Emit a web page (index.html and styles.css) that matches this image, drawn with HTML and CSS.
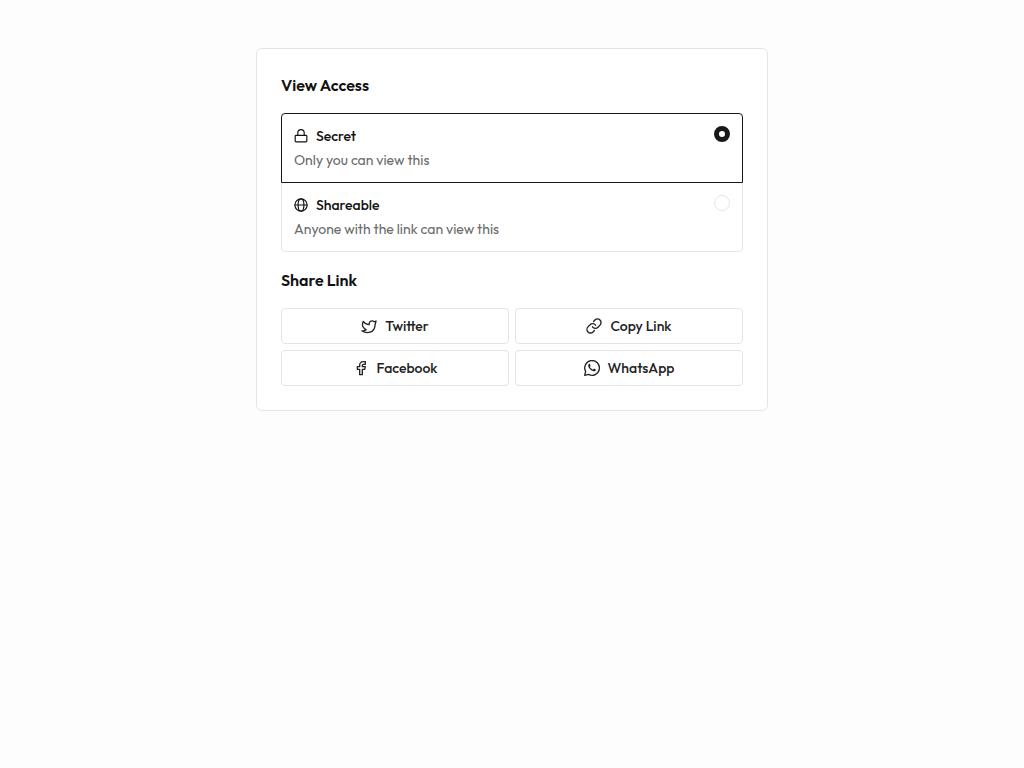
FILE: index.html
```html
<!DOCTYPE html>
<html lang="en">
<head>
<meta charset="utf-8">
<meta name="viewport" content="width=device-width, initial-scale=1">
<title>View Access</title>
<link rel="stylesheet" href="styles.css">
</head>
<body>
<main class="card">
  <section class="section">
    <h2 class="heading" id="access-heading">View Access</h2>
    <div class="options" role="radiogroup" aria-labelledby="access-heading">
      <label class="option">
        <span class="option-body">
          <span class="option-title">
            <svg class="icon-small" viewBox="0 0 24 24" aria-hidden="true"><rect x="2" y="11" width="20" height="11" rx="1.5"/><path d="M6.5 11V6.500a5.500 5.500 0 0 1 11 0V11"/></svg>
            Secret
          </span>
          <span class="option-text">Only you can view this</span>
        </span>
        <input class="radio" type="radio" name="access" value="secret" checked>
      </label>
      <label class="option">
        <span class="option-body">
          <span class="option-title">
            <svg class="icon-small" viewBox="0 0 24 24" aria-hidden="true"><circle cx="12" cy="12" r="10.5"/><ellipse cx="12" cy="12" rx="5" ry="10.5"/><path d="M1.5 12h21"/></svg>
            Shareable
          </span>
          <span class="option-text">Anyone with the link can view this</span>
        </span>
        <input class="radio" type="radio" name="access" value="shareable">
      </label>
    </div>
  </section>
  <section class="section">
    <h2 class="heading">Share Link</h2>
    <div class="actions">
      <button class="button" type="button">
        <svg class="icon" viewBox="0 0 24 24" aria-hidden="true"><path d="M22.5 4.5c-1 .5-2 .7-3 1-1.200-1.400-3-1.500-4.700-.8S12.200 7.200 12.300 9v1c-3.500.1-6.600-1.500-9-4.800 0 0-4.500 8.300 4.500 12.300-2 1.400-4.100 2.300-6.300 2 4 2.200 8.400 2.900 12.200 1.700 4.400-1.300 6.900-5 7.300-10.200.1-1.500.8-3.100 1.500-6.500z"/></svg>
        Twitter
      </button>
      <button class="button" type="button">
        <svg class="icon" viewBox="0 0 24 24" aria-hidden="true"><path d="M9.700 13.200a5.300 5.300 0 0 0 8.200.6l3.100-3.100a5.300 5.300 0 0 0-7.600-7.600l-2.100 2.100"/><path d="M14.300 10.800a5.300 5.300 0 0 0-8.200-.6l-3.100 3.100a5.300 5.300 0 0 0 7.600 7.600l2.100-2.100"/></svg>
        Copy Link
      </button>
      <button class="button" type="button">
        <svg class="icon" viewBox="0 0 24 24" aria-hidden="true"><path d="M6.500 10v4H10v8h4v-8h3.500l1-4H14V8a1.500 1.500 0 0 1 1.500-1.500h3v-4H15a5 5 0 0 0-5 5V10z"/></svg>
        Facebook
      </button>
      <button class="button" type="button">
        <svg class="icon" viewBox="0 0 24 24" aria-hidden="true"><path d="M1 23l1.500-5.800A11 11 0 1 1 6.800 21.500z"/><path class="handset" d="M8.900 6.300c-.4-.7-1.300-.7-1.900.1-1.600 2-.5 4.800 1.800 7.200 2.500 2.600 5.700 4.200 8 2.800.9-.6 1.100-1.400 1-2.100l-2.900-1.400-1.500 1.600c-2.100-.8-3.600-2.200-4.600-4.200l1.200-1.500z"/></svg>
        WhatsApp
      </button>
    </div>
  </section>
</main>
</body>
</html>
```
FILE: styles.css
```css
* {
  box-sizing: border-box;
}

body {
  margin: 0;
  padding: 48px 16px;
  background: #fdfdfd;
  color: #111;
  font-family: Outfit, Lato, sans-serif;
  font-size: 14px;
  line-height: 20px;
}

.card {
  display: grid;
  gap: 16px;
  max-width: 512px;
  margin: 0 auto;
  padding: 24px;
  border: 1px solid #e4e4e4;
  border-radius: 6px;
  background: #fff;
}

.section {
  display: grid;
  gap: 16px;
}

.heading {
  margin: 0;
  font-size: 16px;
  font-weight: 600;
  line-height: 24px;
}

.options {
  display: flex;
  flex-direction: column;
}

.option {
  display: flex;
  justify-content: space-between;
  align-items: flex-start;
  gap: 12px;
  padding: 12px;
  border: 1px solid #e4e4e4;
  cursor: pointer;
}

.option:first-child {
  border-radius: 4px 4px 0 0;
}

.option:last-child {
  margin-top: -1px;
  border-radius: 0 0 4px 4px;
}

.option:has(.radio:checked) {
  position: relative;
  border-color: #18181b;
}

.option-body {
  display: grid;
  gap: 4px;
}

.option-title {
  display: flex;
  align-items: center;
  gap: 8px;
  font-weight: 500;
}

.option-text {
  color: #6b6b6b;
}

.radio {
  appearance: none;
  flex: none;
  width: 16px;
  height: 16px;
  margin: 0;
  border: 1px solid #e4e4e4;
  border-radius: 50%;
  background: #fff;
}

.radio:checked {
  border: 5px solid #18181b;
}

.icon,
.icon-small {
  flex: none;
  width: 16px;
  height: 16px;
  fill: none;
  stroke: currentColor;
  stroke-width: 2;
  stroke-linecap: round;
  stroke-linejoin: round;
}

.icon-small {
  width: 14px;
  height: 14px;
}

.handset {
  fill: currentColor;
  stroke: none;
}

.actions {
  display: grid;
  grid-template-columns: 1fr 1fr;
  gap: 6px;
}

.button {
  display: flex;
  justify-content: center;
  align-items: center;
  gap: 8px;
  padding: 7px 16px;
  border: 1px solid #e4e4e4;
  border-radius: 4px;
  background: #fff;
  color: #222;
  font: inherit;
  font-weight: 500;
  cursor: pointer;
}
```
